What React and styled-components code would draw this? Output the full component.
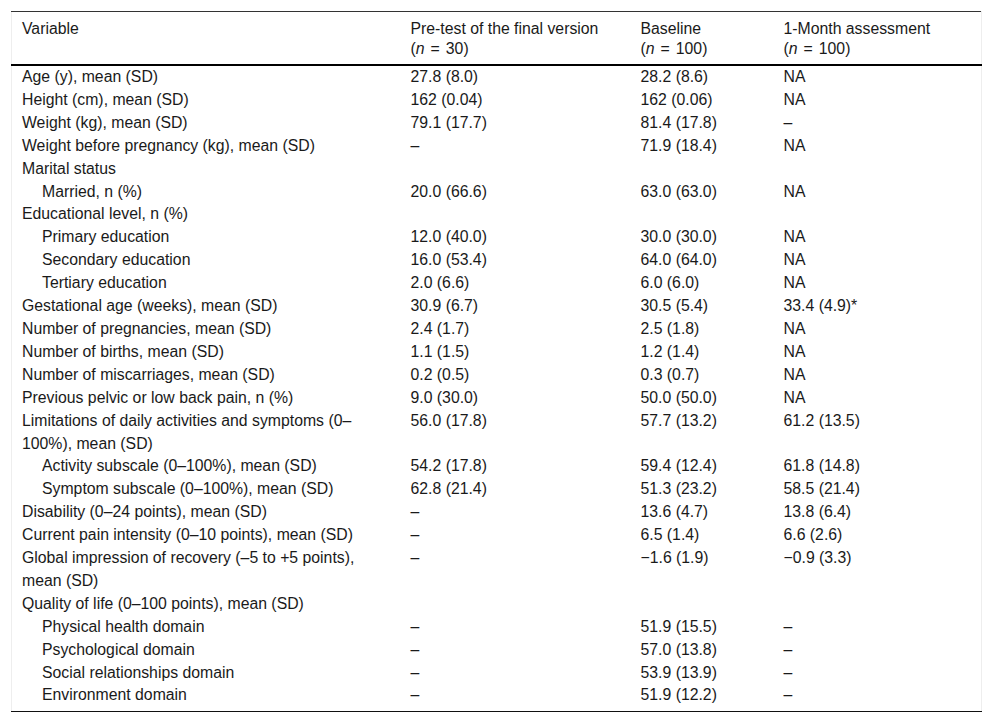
import React from "react";
import styled, { createGlobalStyle } from "styled-components";

const GlobalStyle = createGlobalStyle`
  body {
    margin: 0;
    background: #ffffff;
    font-family: "Liberation Sans", Arial, sans-serif;
    color: #1a1a1a;
  }
`;

const Page = styled.div`
  padding: 11px;
`;

const Table = styled.table`
  width: 970px;
  table-layout: fixed;
  border-collapse: collapse;
  border-top: 1px solid #333;
  border-bottom: 1px solid #111;
  border-left: 1px solid #eeeeee;
  border-right: 1px solid #eeeeee;
  font-size: 15.8px;
`;

const HeadCell = styled.th`
  text-align: left;
  font-weight: normal;
  vertical-align: top;
  line-height: 20px;
  padding: 7px 10px 5px 10px;
  border-bottom: 2px solid #000;
`;

const Cell = styled.td`
  vertical-align: top;
  line-height: 22.9px;
  padding: 0 10px;
  padding-left: ${(p) => (p.$indent ? "30px" : "10px")};
`;

const Row = styled.tr`
  &:last-child td {
    padding-bottom: 4px;
  }
`;

const Italic = styled.i`
  font-style: italic;
`;

const Eq = styled.span`
  margin: 0 6px;
`;

const N = ({ value }) => (
  <>
    (<Italic>n</Italic>
    <Eq>=</Eq>
    {value})
  </>
);

const rows = [
  ["Age (y), mean (SD)", "27.8 (8.0)", "28.2 (8.6)", "NA"],
  ["Height (cm), mean (SD)", "162 (0.04)", "162 (0.06)", "NA"],
  ["Weight (kg), mean (SD)", "79.1 (17.7)", "81.4 (17.8)", "–"],
  ["Weight before pregnancy (kg), mean (SD)", "–", "71.9 (18.4)", "NA"],
  ["Marital status", "", "", ""],
  ["Married, n (%)", "20.0 (66.6)", "63.0 (63.0)", "NA", true],
  ["Educational level, n (%)", "", "", ""],
  ["Primary education", "12.0 (40.0)", "30.0 (30.0)", "NA", true],
  ["Secondary education", "16.0 (53.4)", "64.0 (64.0)", "NA", true],
  ["Tertiary education", "2.0 (6.6)", "6.0 (6.0)", "NA", true],
  ["Gestational age (weeks), mean (SD)", "30.9 (6.7)", "30.5 (5.4)", "33.4 (4.9)*"],
  ["Number of pregnancies, mean (SD)", "2.4 (1.7)", "2.5 (1.8)", "NA"],
  ["Number of births, mean (SD)", "1.1 (1.5)", "1.2 (1.4)", "NA"],
  ["Number of miscarriages, mean (SD)", "0.2 (0.5)", "0.3 (0.7)", "NA"],
  ["Previous pelvic or low back pain, n (%)", "9.0 (30.0)", "50.0 (50.0)", "NA"],
  ["Limitations of daily activities and symptoms (0–100%), mean (SD)", "56.0 (17.8)", "57.7 (13.2)", "61.2 (13.5)"],
  ["Activity subscale (0–100%), mean (SD)", "54.2 (17.8)", "59.4 (12.4)", "61.8 (14.8)", true],
  ["Symptom subscale (0–100%), mean (SD)", "62.8 (21.4)", "51.3 (23.2)", "58.5 (21.4)", true],
  ["Disability (0–24 points), mean (SD)", "–", "13.6 (4.7)", "13.8 (6.4)"],
  ["Current pain intensity (0–10 points), mean (SD)", "–", "6.5 (1.4)", "6.6 (2.6)"],
  ["Global impression of recovery (–5 to +5 points), mean (SD)", "–", "−1.6 (1.9)", "−0.9 (3.3)"],
  ["Quality of life (0–100 points), mean (SD)", "", "", ""],
  ["Physical health domain", "–", "51.9 (15.5)", "–", true],
  ["Psychological domain", "–", "57.0 (13.8)", "–", true],
  ["Social relationships domain", "–", "53.9 (13.9)", "–", true],
  ["Environment domain", "–", "51.9 (12.2)", "–", true],
];

export default function App() {
  return (
    <Page>
      <GlobalStyle />
      <Table>
        <colgroup>
          <col style={{ width: 389 }} />
          <col style={{ width: 230 }} />
          <col style={{ width: 143 }} />
          <col style={{ width: 208 }} />
        </colgroup>
        <thead>
          <tr>
            <HeadCell>Variable</HeadCell>
            <HeadCell>
              Pre-test of the final version
              <br />
              <N value="30" />
            </HeadCell>
            <HeadCell>
              Baseline
              <br />
              <N value="100" />
            </HeadCell>
            <HeadCell>
              1-Month assessment
              <br />
              <N value="100" />
            </HeadCell>
          </tr>
        </thead>
        <tbody>
          {rows.map(([label, pre, base, month, indent]) => (
            <Row key={label}>
              <Cell $indent={indent}>{label}</Cell>
              <Cell>{pre}</Cell>
              <Cell>{base}</Cell>
              <Cell>{month}</Cell>
            </Row>
          ))}
        </tbody>
      </Table>
    </Page>
  );
}
